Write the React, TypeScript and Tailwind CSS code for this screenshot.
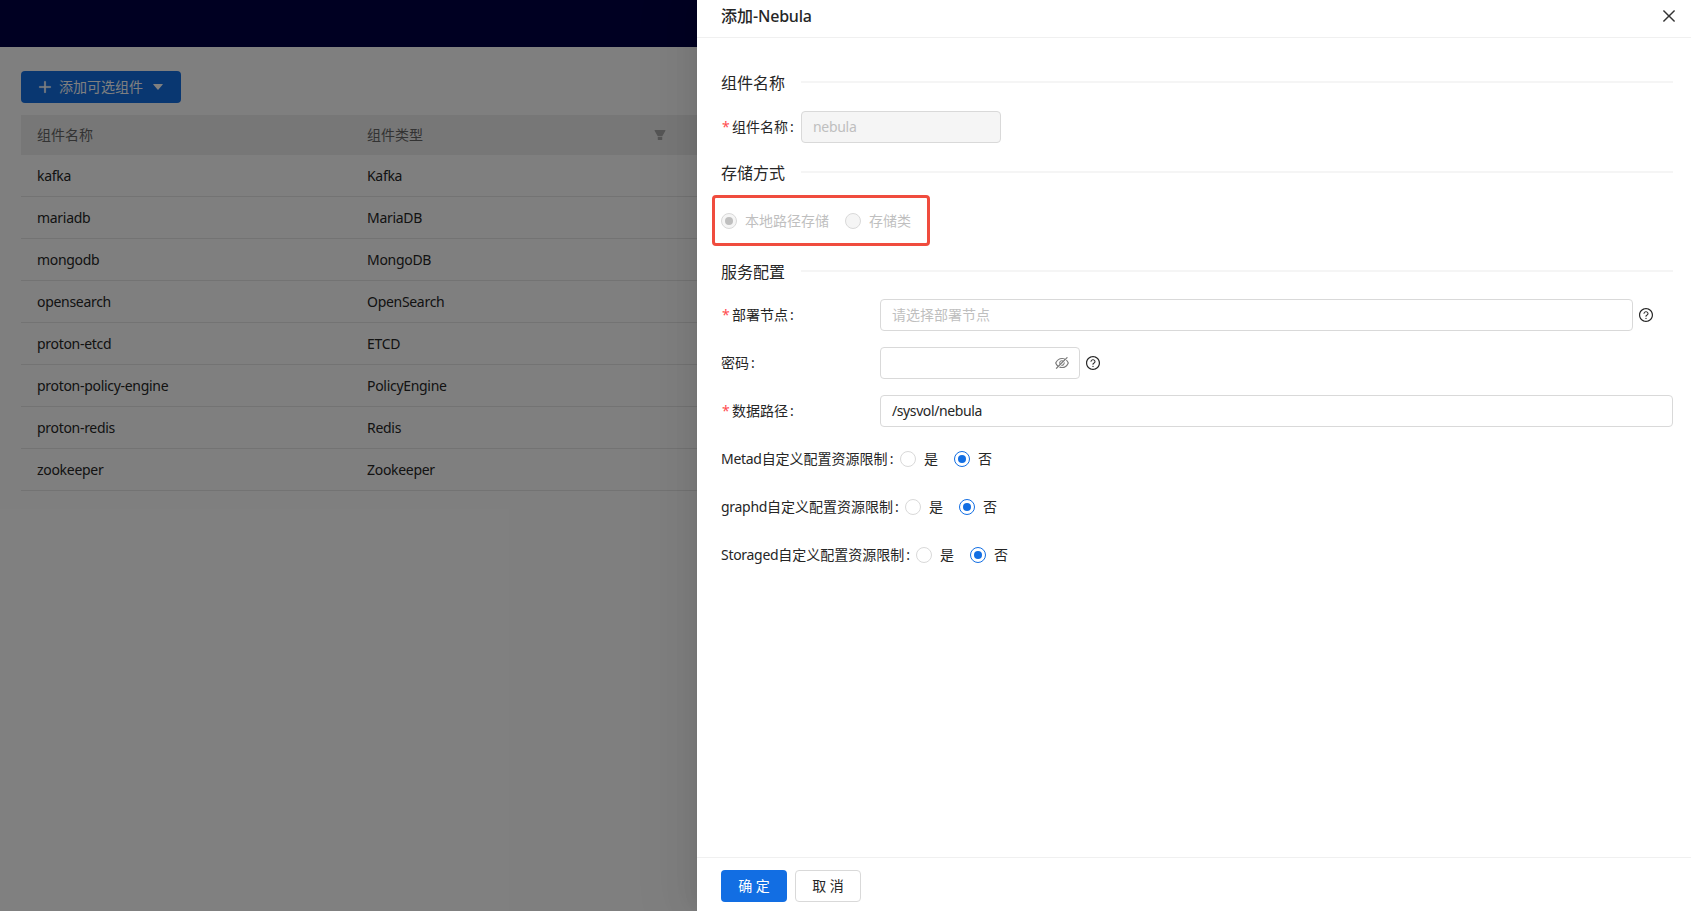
import { AiFillCaretDown, AiFillFilter, AiOutlineClose, AiOutlineEyeInvisible, AiOutlinePlus, AiOutlineQuestionCircle } from 'react-icons/ai'

const components = [
  { name: 'kafka', type: 'Kafka' },
  { name: 'mariadb', type: 'MariaDB' },
  { name: 'mongodb', type: 'MongoDB' },
  { name: 'opensearch', type: 'OpenSearch' },
  { name: 'proton-etcd', type: 'ETCD' },
  { name: 'proton-policy-engine', type: 'PolicyEngine' },
  { name: 'proton-redis', type: 'Redis' },
  { name: 'zookeeper', type: 'Zookeeper' },
]

const SectionTitle = ({ title, className }: { title: string; className: string }) => (
  <div className={`flex items-center h-6 gap-4 ${className}`}>
    <span className="text-base text-[#262626] leading-6">{title}</span>
    <div className="flex-1 h-0.5 -translate-y-px bg-[#f5f5f5]" />
  </div>
)

const Radio = ({ label, checked, disabled }: { label: string; checked?: boolean; disabled?: boolean }) => (
  <label className={`flex items-center gap-2 ${disabled ? 'text-[#bfbfbf]' : 'text-[#262626]'}`}>
    <span
      className={`w-4 h-4 rounded-full border flex items-center justify-center ${
        disabled ? 'bg-[#f5f5f5] border-[#d9d9d9]' : checked ? 'border-[#126ee3]' : 'border-[#d9d9d9]'
      }`}
    >
      {checked && <span className={`w-2 h-2 rounded-full ${disabled ? 'bg-[#bfbfbf]' : 'bg-[#126ee3]'}`} />}
    </span>
    <span>{label}</span>
  </label>
)

const Required = () => <span className="w-[11px] pl-px text-[#ff4d4f]">*</span>

const Label = ({ text, width, prefix }: { text: string; width: string; prefix?: string }) => (
  <span className={`${width} text-[#262626]`}>
    {prefix && <span className="tracking-[-0.3px]">{prefix}</span>}
    {text}
    <span className="ml-0.5">:</span>
  </span>
)

const ResourceLimit = ({ prefix, width }: { prefix: string; width: string }) => (
  <div className="flex items-center h-8 mb-4">
    <Label prefix={prefix} text="自定义配置资源限制" width={width} />
    <div className="flex items-center gap-4">
      <Radio label="是" />
      <Radio label="否" checked />
    </div>
  </div>
)

export default function App() {
  return (
    <div className="relative h-screen w-full overflow-hidden bg-white text-sm font-['Noto_Sans','Noto_Sans_CJK_SC',sans-serif]">
      {/* Page below the mask */}
      <div className="h-[47px] bg-[#000044]" />
      <div className="px-[21px] pt-6">
        <button className="flex items-center h-8 w-[160px] pl-4 rounded-sm bg-[#126ee3] text-white">
          <AiOutlinePlus className="w-4 h-4 stroke-current stroke-[40]" />
          <span className="ml-1.5">添加可选组件</span>
          <AiFillCaretDown className="ml-2 w-3.5 h-3.5" />
        </button>
        <div className="mt-3 w-[1600px]">
          <div className="grid grid-cols-[330px_1fr] items-center h-10 bg-[#eeeeee] text-[#666666]">
            <span className="pl-4">组件名称</span>
            <div className="flex items-center pl-4">
              <span>组件类型</span>
              <AiFillFilter className="ml-[230px] w-3.5 h-3.5 text-[#aaaaaa]" />
            </div>
          </div>
          {components.map((c) => (
            <div key={c.name} className="grid grid-cols-[330px_1fr] items-center h-[42px] border-b border-[#e6e6e6] text-[#262626] tracking-[-0.3px]">
              <span className="pl-4">{c.name}</span>
              <span className="pl-4">{c.type}</span>
            </div>
          ))}
        </div>
      </div>

      {/* Mask */}
      <div className="absolute inset-0 bg-black/50" />

      {/* Drawer */}
      <div className="absolute top-0 right-0 bottom-0 w-[994px] flex flex-col bg-white shadow-[-6px_0_16px_-8px_rgba(0,0,0,0.08),-9px_0_28px_0_rgba(0,0,0,0.05),-12px_0_48px_16px_rgba(0,0,0,0.03)]">
        <div className="flex items-center justify-between h-[38px] pl-6 pr-[13px] pb-1.5 border-b border-[#f0f0f0]">
          <span className="text-base font-medium text-[#262626]">
            添加<span className="tracking-[-0.2px]">-Nebula</span>
          </span>
          <AiOutlineClose className="w-[18px] h-[18px] text-[#333333]" />
        </div>

        <div className="flex-1 pl-6 pr-[18px]">
          <SectionTitle title="组件名称" className="mt-[33px]" />
          <div className="flex items-center h-8 mt-4 mb-[18px]">
            <Required />
            <Label text="组件名称" width="w-[69px]" />
            <div className="w-[200px] h-8 px-[11px] flex items-center rounded-sm border border-[#d9d9d9] bg-[#f5f5f5] text-[#bfbfbf] tracking-[-0.3px]">nebula</div>
          </div>

          <SectionTitle title="存储方式" className="" />
          <div className="-ml-[9px] mt-[10px] mb-3.5 w-[218px] h-[51px] pl-[6px] flex items-center gap-4 rounded-sm border-[3px] border-[#f04c3e]">
            <Radio label="本地路径存储" checked disabled />
            <Radio label="存储类" disabled />
          </div>

          <SectionTitle title="服务配置" className="mb-[15px]" />
          <div className="flex items-center h-8 mb-4">
            <Required />
            <Label text="部署节点" width="w-[148px]" />
            <div className="w-[753px] h-8 px-[11px] flex items-center rounded-sm border border-[#d9d9d9] text-[#bfbfbf]">请选择部署节点</div>
            <AiOutlineQuestionCircle className="ml-[5px] w-4 h-4 text-[#262626]" />
          </div>
          <div className="flex items-center h-8 mb-4">
            <Label text="密码" width="w-[159px]" />
            <div className="w-[200px] h-8 pr-[9px] flex items-center justify-end rounded-sm border border-[#d9d9d9]">
              <AiOutlineEyeInvisible className="w-4 h-4 text-[#7a7a7a]" />
            </div>
            <AiOutlineQuestionCircle className="ml-[5px] w-4 h-4 text-[#262626]" />
          </div>
          <div className="flex items-center h-8 mb-4">
            <Required />
            <Label text="数据路径" width="w-[148px]" />
            <div className="flex-1 h-8 px-[11px] flex items-center rounded-sm border border-[#d9d9d9] text-[#262626] tracking-[-0.4px]">/sysvol/nebula</div>
          </div>
          <ResourceLimit prefix="Metad" width="w-[179px]" />
          <ResourceLimit prefix="graphd" width="w-[184px]" />
          <ResourceLimit prefix="Storaged" width="w-[195px]" />
        </div>

        <div className="flex gap-2 h-[54px] pl-6 pt-3 border-t border-[#f0f0f0]">
          <button className="w-[66px] h-8 rounded-sm bg-[#126ee3] text-white">确 定</button>
          <button className="w-[66px] h-8 rounded-sm border border-[#d9d9d9] text-[#262626]">取 消</button>
        </div>
      </div>
    </div>
  )
}
